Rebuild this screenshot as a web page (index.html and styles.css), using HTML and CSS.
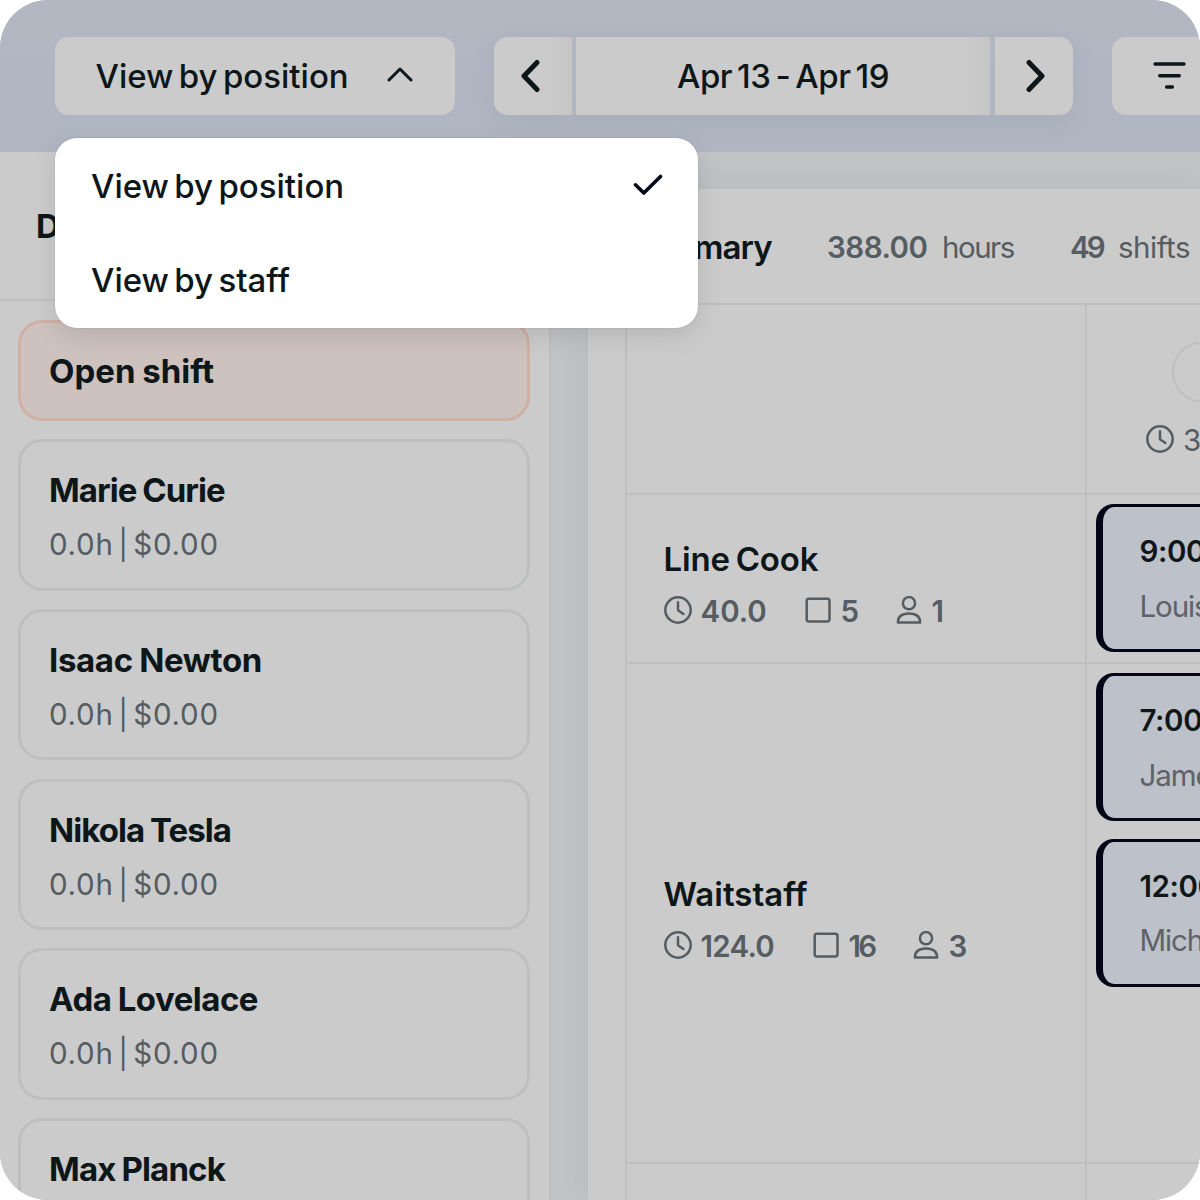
FILE: index.html
```html
<!DOCTYPE html>
<html lang="en">
<head>
    <meta charset="UTF-8">
    <meta name="viewport" content="width=device-width, initial-scale=1.0">
    <title>Schedule</title>
    <link rel="stylesheet" href="styles.css">
</head>
<body>
    <svg class="sprite" aria-hidden="true">
        <symbol id="clock" viewBox="0 0 28 28">
            <circle cx="14" cy="14" r="12.7"/>
            <path d="M14 6.2V14.2L19.4 18"/>
        </symbol>
        <symbol id="square" viewBox="0 0 28 28">
            <rect x="2.7" y="2.7" width="22.8" height="22.8" rx="2.2"/>
        </symbol>
        <symbol id="person" viewBox="0 0 28 28">
            <circle cx="14" cy="7.2" r="6.1"/>
            <path d="M2.9 26.5C2.9 20.6 7.2 17.6 14 17.6S25.1 20.6 25.1 26.5Z"/>
        </symbol>
    </svg>
    <div class="app">
        <header class="toolbar">
            <button class="btn view-btn">
                <span class="t-view">View by position</span>
                <svg class="chevron-up" viewBox="0 0 26 16"><path d="M2 14L13 3L24 14"/></svg>
            </button>
            <div class="date-group">
                <button class="btn prev"><svg class="arrow" viewBox="0 0 20 34"><path d="M17 3.5L4 17L17 30.5"/></svg></button>
                <button class="btn range"><span class="t-range">Apr 13 - Apr 19</span></button>
                <button class="btn next"><svg class="arrow" viewBox="0 0 20 34"><path d="M3 3.5L16 17L3 30.5"/></svg></button>
            </div>
            <button class="btn filter-btn">
                <svg class="filter" viewBox="0 0 33 28"><path d="M2 2H31M6.7 13.8H26.3M13.6 25H19.4"/></svg>
            </button>
        </header>

        <main class="main">
            <aside class="sidebar">
                <div class="sidebar-head"><h2>Drag &amp; drop</h2></div>
                <div class="cards">
                    <div class="card open"><h3 class="n-open">Open shift</h3></div>
                    <div class="card"><h3 class="n-marie">Marie Curie</h3><p>0.0h | $0.00</p></div>
                    <div class="card"><h3 class="n-isaac">Isaac Newton</h3><p>0.0h | $0.00</p></div>
                    <div class="card"><h3 class="n-nikola">Nikola Tesla</h3><p>0.0h | $0.00</p></div>
                    <div class="card"><h3 class="n-ada">Ada Lovelace</h3><p>0.0h | $0.00</p></div>
                    <div class="card"><h3 class="n-max">Max Planck</h3></div>
                </div>
            </aside>

            <section class="schedule">
                <div class="summary">
                    <h2>Summary</h2>
                    <div class="total hours"><b>388.00</b><span>hours</span></div>
                    <div class="total shifts"><b>49</b><span>shifts</span></div>
                </div>
                <div class="grid">
                    <div class="row row-head">
                        <div class="label"></div>
                        <div class="day">
                            <div class="day-pill"></div>
                            <div class="day-hours"><svg class="icon"><use href="#clock"/></svg><span>3</span></div>
                        </div>
                    </div>
                    <div class="row row-cook">
                        <div class="label">
                            <h3 class="n-cook">Line Cook</h3>
                            <div class="stats">
                                <span class="stat hrs"><svg class="icon"><use href="#clock"/></svg><b>40.0</b></span>
                                <span class="stat cnt"><svg class="icon"><use href="#square"/></svg><b>5</b></span>
                                <span class="stat"><svg class="icon"><use href="#person"/></svg><b>1</b></span>
                            </div>
                        </div>
                        <div class="day">
                            <div class="shift"><b>9:00</b><span>Louis</span></div>
                        </div>
                    </div>
                    <div class="row row-wait">
                        <div class="label">
                            <h3 class="n-wait">Waitstaff</h3>
                            <div class="stats tight">
                                <span class="stat hrs wide"><svg class="icon"><use href="#clock"/></svg><b>124.0</b></span>
                                <span class="stat cnt wide"><svg class="icon"><use href="#square"/></svg><b>16</b></span>
                                <span class="stat"><svg class="icon"><use href="#person"/></svg><b>3</b></span>
                            </div>
                        </div>
                        <div class="day">
                            <div class="shift"><b>7:00</b><span>James</span></div>
                            <div class="shift"><b>12:00</b><span>Michael</span></div>
                        </div>
                    </div>
                    <div class="row row-last">
                        <div class="label"></div>
                        <div class="day"></div>
                    </div>
                </div>
            </section>
        </main>

        <div class="menu">
            <div class="menu-item">
                <span class="t-view">View by position</span>
                <svg class="check" viewBox="0 0 30 22"><path d="M2.5 10.8L10.8 19L27.5 2.5"/></svg>
            </div>
            <div class="menu-item"><span class="t-staff">View by staff</span></div>
        </div>
    </div>
</body>
</html>
```
FILE: styles.css
```css
:root {
    --panel: #cbcbcb;
    --line: #bebfc0;
    --ink: #0d1619;
    --muted: #555c62;
    --navy: #020617;
}
* {
    box-sizing: border-box;
}
body {
    margin: 0;
    background: #fff;
    font-family: Inter, "Liberation Sans", sans-serif;
    color: var(--ink);
}
h2, h3, p {
    margin: 0;
    white-space: nowrap;
}
b {
    font-weight: 600;
}
svg {
    display: block;
    flex: none;
    fill: none;
    stroke: currentColor;
    stroke-linecap: round;
    stroke-linejoin: round;
}
.sprite {
    display: none;
}
.app {
    position: relative;
    width: 1200px;
    height: 1200px;
    border-radius: 48px;
    overflow: hidden;
    display: flex;
    flex-direction: column;
    background: #c2c3c6;
}

/* toolbar */
.toolbar {
    flex: none;
    height: 152px;
    padding: 37px 0 0 54.5px;
    display: flex;
    align-items: flex-start;
    gap: 39px;
    background: linear-gradient(#b4b7c1, #b0b7c3 40%, #afb6c1);
    overflow: hidden;
}
.btn {
    height: 78px;
    border: none;
    padding: 0;
    display: flex;
    flex: none;
    align-items: center;
    justify-content: center;
    background: var(--panel);
    color: var(--ink);
    font: 500 33px/40px Inter, "Liberation Sans", sans-serif;
    white-space: nowrap;
}
.view-btn {
    width: 400px;
    padding: 0 42px 0 41px;
    justify-content: space-between;
    border-radius: 14px;
}
.date-group {
    display: flex;
    gap: 4.5px;
    border-radius: 14px;
    box-shadow: 0 6px 24px rgba(90, 80, 110, 0.09);
}
.prev, .next {
    width: 78px;
}
.prev {
    padding-right: 5px;
    border-radius: 14px 0 0 14px;
    background: linear-gradient(90deg, var(--panel) 70%, #c5c5c6);
}
.range {
    width: 414px;
    background: linear-gradient(90deg, var(--panel) 94%, #c5c5c6);
}
.next {
    padding-left: 5px;
    border-radius: 0 14px 14px 0;
}
.filter-btn {
    width: 140px;
    padding-left: 41px;
    justify-content: flex-start;
    border-radius: 14px;
}
.chevron-up {
    width: 26px;
    height: 16px;
    margin-bottom: 4px;
    stroke-width: 3;
}
.arrow {
    width: 20px;
    height: 34px;
    stroke-width: 5;
}
.filter {
    width: 33px;
    height: 28px;
    margin-bottom: 1px;
    stroke-width: 3.4;
}
.t-view {
    word-spacing: -3.4px;
}
.t-staff {
    word-spacing: -3.4px;
}
.t-range {
    word-spacing: -3.4px;
    letter-spacing: -0.45px;
}

/* sidebar */
.main {
    flex: 1;
    min-height: 0;
    display: flex;
}
.sidebar {
    flex: none;
    width: 551px;
    background: var(--panel);
    border-right: 2px solid var(--line);
}
.sidebar-head {
    height: 149px;
    padding: 54px 0 0 36px;
    border-bottom: 2px solid var(--line);
}
h2, h3 {
    font-size: 33px;
    line-height: 40px;
    font-weight: 600;
}
.sidebar-head h2 {
    font-weight: 700;
}
.cards {
    padding: 18.5px 19px 0 18px;
    display: flex;
    flex-direction: column;
    gap: 18.2px;
}
.card {
    height: 151.5px;
    flex: none;
    padding: 28.2px 28px 0 28px;
    border: 3px solid var(--line);
    border-radius: 24px;
}
.card h3 {
    font-weight: 700;
    word-spacing: -1px;
}
.card p {
    margin-top: 14px;
    font-size: 29.5px;
    line-height: 40px;
    letter-spacing: 0.75px;
    word-spacing: -4.5px;
    color: var(--muted);
}
.card.open {
    height: 101.5px;
    background: #cdc2bd;
    border-color: #cfb0a5;
}
.n-marie, .n-nikola {
    letter-spacing: -0.95px;
}
.n-isaac {
    letter-spacing: -0.35px;
}
.n-ada {
    letter-spacing: -0.5px;
}
.n-max {
    letter-spacing: -0.85px;
}

/* schedule */
.schedule {
    flex: 1;
    min-width: 0;
    margin: 37px 0 0 37px;
    background: var(--panel);
    box-shadow: 0 0 30px rgba(100, 100, 120, 0.09);
}
.summary {
    height: 115.5px;
    padding: 37.5px 0 0 37px;
    display: flex;
    border-bottom: 2.5px solid var(--line);
    white-space: nowrap;
}
.summary h2 {
    width: 202px;
    letter-spacing: -0.9px;
}
.total {
    display: flex;
    font-size: 29.5px;
    line-height: 40px;
    color: var(--muted);
}
.hours {
    width: 243px;
}
.hours b {
    width: 115px;
    letter-spacing: -0.5px;
}
.hours span {
    letter-spacing: -1.5px;
}
.shifts b {
    width: 48px;
    letter-spacing: -2.8px;
}
.shifts span {
    letter-spacing: -0.5px;
}
.grid {
    margin-left: 37px;
    border-left: 2px solid var(--line);
}
.row {
    display: flex;
    border-bottom: 2px solid var(--line);
}
.row-head {
    height: 190px;
}
.row-cook {
    height: 169px;
}
.row-wait {
    height: 500.5px;
}
.row-last {
    height: 60px;
}
.label {
    flex: none;
    width: 460px;
    padding: 14px 0 0 36.5px;
    display: flex;
    flex-direction: column;
    justify-content: center;
    border-right: 2px solid var(--line);
}
.n-cook {
    word-spacing: -2.4px;
    letter-spacing: -0.15px;
}
.stats {
    margin-top: 12px;
    display: flex;
    color: var(--muted);
    font-size: 29.5px;
    line-height: 40px;
}
.stat {
    display: flex;
    align-items: center;
    gap: 9px;
}
.stat.hrs {
    width: 140px;
}
.stat.cnt {
    width: 91px;
}
.stat.hrs.wide {
    width: 148px;
}
.stat.cnt.wide {
    width: 100px;
}
.tight .hrs {
    letter-spacing: -0.7px;
}
.tight .cnt {
    letter-spacing: -2.8px;
}
.icon {
    width: 28px;
    height: 28px;
    margin-bottom: 2px;
    stroke-width: 2.5;
}
.day {
    flex: 1;
    min-width: 0;
    padding: 9.5px 0 0 8.5px;
    overflow: hidden;
    white-space: nowrap;
}
.row-head .day {
    padding: 36px 0 0 59px;
}
.day-pill {
    width: 120px;
    height: 62px;
    margin-left: 26px;
    border: 2px solid var(--line);
    border-radius: 31px;
}
.day-hours {
    margin-top: 17px;
    display: flex;
    align-items: center;
    gap: 9px;
    font-size: 29.5px;
    line-height: 40px;
    color: var(--muted);
}
.shift {
    width: 300px;
    height: 148px;
    margin-bottom: 17.5px;
    padding: 24px 0 0 37px;
    display: flex;
    flex-direction: column;
    gap: 14.5px;
    background: #bdc1ca;
    border: 3.5px solid var(--navy);
    border-left-width: 7px;
    border-radius: 18px;
    font-size: 29.5px;
    line-height: 40px;
    color: #111719;
}
.shift b {
    letter-spacing: -0.4px;
}
.shift span {
    color: #5f6268;
    letter-spacing: -1.1px;
}

/* dropdown */
.menu {
    position: absolute;
    left: 55px;
    top: 138px;
    width: 643px;
    height: 189.5px;
    border-radius: 22px;
    background: #fff;
    box-shadow: 0 8px 24px rgba(0, 0, 0, 0.1), 0 0 2px rgba(0, 0, 0, 0.12);
}
.menu-item {
    height: 94.5px;
    padding: 1px 35px 0 36px;
    display: flex;
    align-items: center;
    justify-content: space-between;
    font-size: 33px;
    line-height: 40px;
    font-weight: 500;
    white-space: nowrap;
}
.check {
    width: 30px;
    height: 22px;
    margin-bottom: 2px;
    stroke: var(--navy);
    stroke-width: 3.6;
}
```
